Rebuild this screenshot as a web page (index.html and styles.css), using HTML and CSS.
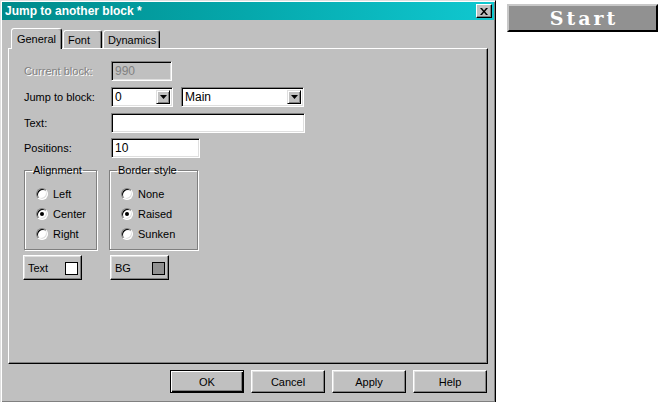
FILE: index.html
```html
<!DOCTYPE html>
<html>
<head>
<meta charset="utf-8">
<link rel="stylesheet" href="styles.css">
</head>
<body>
<div class="screen">
  <div class="dialog">
    <div class="titlebar">
      <span class="title">Jump to another block *</span>
      <span class="close"><svg width="8" height="7" viewBox="0 0 8 7"><path d="M0 0h2l2 2.5L6 0h2L5 3.5 8 7H6L4 4.5 2 7H0l3-3.5z" fill="#000"/></svg></span>
    </div>
    <div class="tabs">
      <div class="tab active">General</div>
      <div class="tab">Font</div>
      <div class="tab">Dynamics</div>
    </div>
    <div class="panel">
      <div class="row">
        <span class="label disabled">Current block:</span>
        <span class="field disabled-field w60">990</span>
      </div>
      <div class="row">
        <span class="label">Jump to block:</span>
        <span class="field combo w61">0<span class="drop"><svg width="7" height="4" viewBox="0 0 7 4"><path d="M0 0h7L3.5 4z" fill="#000"/></svg></span></span>
        <span class="field combo w123 ml9">Main<span class="drop"><svg width="7" height="4" viewBox="0 0 7 4"><path d="M0 0h7L3.5 4z" fill="#000"/></svg></span></span>
      </div>
      <div class="row">
        <span class="label">Text:</span>
        <span class="field w193"></span>
      </div>
      <div class="row">
        <span class="label">Positions:</span>
        <span class="field w88">10</span>
      </div>
      <div class="groups">
        <fieldset class="group g1">
          <legend>Alignment</legend>
          <div class="radio"><span class="dot"></span>Left</div>
          <div class="radio"><span class="dot on"></span>Center</div>
          <div class="radio"><span class="dot"></span>Right</div>
        </fieldset>
        <fieldset class="group g2">
          <legend>Border style</legend>
          <div class="radio"><span class="dot"></span>None</div>
          <div class="radio"><span class="dot on"></span>Raised</div>
          <div class="radio"><span class="dot"></span>Sunken</div>
        </fieldset>
      </div>
      <div class="colors">
        <div class="btn cbtn">Text<span class="swatch white"></span></div>
        <div class="btn cbtn">BG<span class="swatch grey"></span></div>
      </div>
    </div>
    <div class="buttons">
      <div class="btn dbtn default">OK</div>
      <div class="btn dbtn">Cancel</div>
      <div class="btn dbtn">Apply</div>
      <div class="btn dbtn">Help</div>
    </div>
  </div>
  <div class="start">Start</div>
</div>
</body>
</html>
```

FILE: styles.css
```css
html, body {
  margin: 0;
  padding: 0;
  background: #fff;
}
body {
  font-family: "Liberation Sans", Arial, sans-serif;
  font-size: 11px;
  color: #000;
}
.screen {
  display: flex;
  align-items: flex-start;
  width: 667px;
  height: 402px;
  overflow: hidden;
}
.dialog {
  box-sizing: border-box;
  width: 496px;
  height: 403px;
  background: #c0c0c0;
  border: 1px solid;
  border-color: #dfdfdf #000 #000 #dfdfdf;
  box-shadow: inset 1px 1px 0 #fff, inset -1px -1px 0 #808080;
  padding: 1px;
  display: flex;
  flex-direction: column;
  flex: none;
}
.titlebar {
  height: 18px;
  background: linear-gradient(to right, #008a8a 0%, #05a8ac 50%, #10c8d0 100%);
  display: flex;
  align-items: center;
  justify-content: space-between;
  padding: 0 2px 0 3px;
}
.title {
  color: #fff;
  font-weight: bold;
  font-size: 12px;
}
.close {
  box-sizing: border-box;
  width: 16px;
  height: 14px;
  background: #c0c0c0;
  border: 1px solid;
  border-color: #fff #000 #000 #fff;
  box-shadow: inset -1px -1px 0 #808080;
  display: flex;
  align-items: center;
  justify-content: center;
}
.close svg { display: block; }
.tabs {
  display: flex;
  align-items: flex-end;
  margin: 8px 0 0 9px;
  height: 20px;
  position: relative;
  z-index: 1;
}
.tab {
  box-sizing: border-box;
  height: 18px;
  padding: 2px 0 0 4px;
  border: 1px solid;
  border-bottom: none;
  border-color: #fff #000 transparent #fff;
  border-radius: 3px 3px 0 0;
  box-shadow: inset -1px 0 0 #808080;
  line-height: 14px;
  white-space: nowrap;
}
.tab + .tab { margin-left: 1px; }
.tab.active {
  width: 51px;
  height: 21px;
  margin-bottom: -1px;
  background: #c0c0c0;
  padding: 3px 0 0 0;
  text-align: center;
}
.tab:nth-child(2) { width: 39px; }
.tab:nth-child(3) { width: 57px; }
.panel {
  box-sizing: border-box;
  margin: 0 6px 0 6px;
  height: 316px;
  border: 1px solid;
  border-color: #fff #000 #000 #fff;
  box-shadow: inset -1px -1px 0 #808080;
  padding: 12px 0 0 15px;
}
.row {
  display: flex;
  align-items: center;
  height: 20px;
  margin-bottom: 6px;
}
.row:nth-child(3) { margin-bottom: 5px; }
.label {
  width: 87px;
  flex: none;
}
.label.disabled {
  color: #808080;
  text-shadow: 1px 1px 0 #fff;
}
.field {
  box-sizing: border-box;
  height: 20px;
  background: #fff;
  border: 1px solid;
  border-color: #808080 #fff #fff #808080;
  box-shadow: inset 1px 1px 0 #000, inset -1px -1px 0 #dfdfdf;
  padding: 2px 3px 0 3px;
  line-height: 15px;
  position: relative;
  font-size: 12px;
}
.disabled-field {
  background: #c0c0c0;
  color: #808080;
}
.w60 { width: 61px; }
.w61 { width: 62px; }
.w123 { width: 123px; }
.w193 { width: 194px; }
.w88 { width: 89px; }
.ml9 { margin-left: 8px; }
.combo { padding-right: 18px; }
.drop {
  position: absolute;
  right: 2px;
  top: 2px;
  box-sizing: border-box;
  width: 14px;
  height: 14px;
  background: #c0c0c0;
  border: 1px solid;
  border-color: #dfdfdf #000 #000 #dfdfdf;
  box-shadow: inset 1px 1px 0 #fff, inset -1px -1px 0 #808080;
  display: flex;
  align-items: center;
  justify-content: center;
}
.drop svg { display: block; }
.groups {
  display: flex;
  gap: 12px;
  margin-top: 2px;
}
.group {
  box-sizing: border-box;
  margin: 0;
  padding: 7px 0 0 11px;
  border: 1px solid #808080;
  box-shadow: 1px 1px 0 #fff, inset 1px 1px 0 #fff;
  height: 86px;
}
.g1 { width: 73px; }
.g2 { width: 89px; }
.group legend {
  padding: 0 1px;
  margin-left: -4px;
  line-height: 13px;
}
.radio {
  display: flex;
  align-items: center;
  height: 20px;
}
.dot {
  box-sizing: border-box;
  width: 12px;
  height: 12px;
  border-radius: 50%;
  background: #fff;
  border: 1px solid;
  border-color: #808080 #fff #fff #808080;
  box-shadow: inset 1px 1px 0 #000, inset -1px -1px 0 #dfdfdf;
  margin-right: 5px;
  position: relative;
}
.dot.on::after {
  content: "";
  position: absolute;
  left: 3px;
  top: 3px;
  width: 4px;
  height: 4px;
  border-radius: 50%;
  background: #000;
}
.colors {
  display: flex;
  gap: 28px;
  margin: 5px 0 0 -1px;
}
.btn {
  box-sizing: border-box;
  background: #c0c0c0;
  border: 1px solid;
  border-color: #fff #000 #000 #fff;
  box-shadow: inset -1px -1px 0 #808080, inset 1px 1px 0 #dfdfdf;
}
.cbtn {
  width: 59px;
  height: 25px;
  display: flex;
  align-items: center;
  justify-content: space-between;
  padding: 0 3px 0 4px;
}
.swatch {
  box-sizing: border-box;
  width: 13px;
  height: 13px;
  border: 1px solid #000;
  margin-top: 1px;
}
.swatch.white { background: #fff; }
.swatch.grey { background: #909090; }
.buttons {
  display: flex;
  justify-content: flex-end;
  gap: 7px;
  margin: 6px 7px 0 0;
}
.dbtn {
  width: 74px;
  height: 23px;
  display: flex;
  align-items: center;
  justify-content: center;
}
.dbtn.default {
  border: 1px solid #000;
  box-shadow: inset 1px 1px 0 #fff, inset -1px -1px 0 #000, inset -2px -2px 0 #808080;
}
.start {
  box-sizing: border-box;
  width: 151px;
  height: 28px;
  margin: 4px 0 0 11px;
  background: #919191;
  border: 2px solid;
  border-color: #c8c8c8 #000 #000 #c8c8c8;
  color: #fff;
  font-family: "DejaVu Serif", "Liberation Serif", serif;
  font-weight: bold;
  font-size: 19px;
  letter-spacing: 3px;
  text-indent: 3px;
  text-align: center;
  line-height: 24px;
  flex: none;
}
```
